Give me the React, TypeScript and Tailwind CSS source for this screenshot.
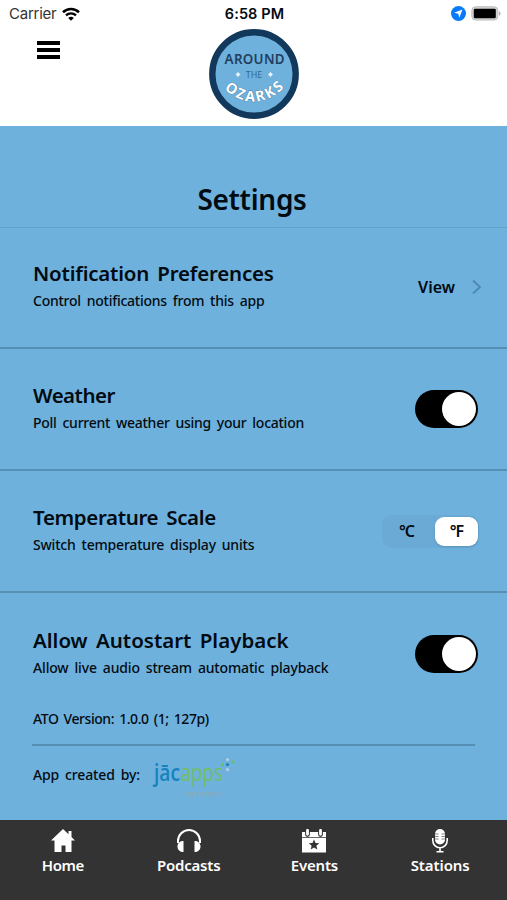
import type { ReactNode } from "react";

const settings: {
  title: string;
  titleClass: string;
  text: string;
  textClass: string;
  rowClass: string;
  control: ReactNode;
}[] = [
  {
    title: "Notification Preferences",
    titleClass: "tracking-[-0.2px] [word-spacing:3px]",
    text: "Control notifications from this app",
    textClass: "tracking-[-0.25px]",
    rowClass: "h-[121px] border-b-2 pb-[2px]",
    control: (
      <div className="flex items-center pr-[25px]">
        <span className="text-[16px] font-semibold leading-6">View</span>
        <svg className="ml-[17px] h-4 w-[10px]" viewBox="0 0 10 16" fill="none">
          <path d="M1 1.5L8 8l-7 6.5" stroke="#4d88b0" strokeWidth="1.8" />
        </svg>
      </div>
    ),
  },
  {
    title: "Weather",
    titleClass: "tracking-[-0.5px]",
    text: "Poll current weather using your location",
    textClass: "tracking-[-0.26px]",
    rowClass: "h-[122px] border-b-2",
    control: <Toggle />,
  },
  {
    title: "Temperature Scale",
    titleClass: "tracking-[-0.35px] [word-spacing:3px]",
    text: "Switch temperature display units",
    textClass: "tracking-[-0.2px]",
    rowClass: "h-[122px] border-b-2",
    control: <UnitSwitch />,
  },
  {
    title: "Allow Autostart Playback",
    titleClass: "[word-spacing:3px]",
    text: "Allow live audio stream automatic playback",
    textClass: "tracking-[-0.16px]",
    rowClass: "h-[122px]",
    control: <Toggle />,
  },
];

function Toggle() {
  return (
    <div className="mr-[29px] flex h-[38px] w-[63px] items-center justify-end rounded-full bg-black pr-[2px]">
      <div className="h-[34px] w-[34px] rounded-full bg-white" />
    </div>
  );
}

function UnitSwitch() {
  return (
    <div className="mr-[28px] flex h-[33px] w-[97px] items-center rounded-[10px] bg-[#6aaad5] pr-px text-[16px] font-semibold">
      <span className="flex-1 pr-[4px] text-center tracking-[-1px]">°C</span>
      <span className="flex h-[29px] w-[43px] items-center justify-center rounded-[9px] bg-white tracking-[-1px] shadow">
        °F
      </span>
    </div>
  );
}

function StatusBar() {
  return (
    <div className="grid h-[27px] grid-cols-3 items-center pl-[9px] pr-[6px] font-['Inter']">
      <div className="flex items-center">
        <span className="text-[15px] leading-5 tracking-[-0.25px] text-[#333]">Carrier</span>
        <svg className="ml-[6px] h-[14px] w-[18px]" viewBox="0 0 18 14" fill="none" stroke="#000">
          <path d="M1 5.2a11.6 11.6 0 0 1 16 0" strokeWidth="2.6" />
          <path d="M4 8.4a7.3 7.3 0 0 1 10 0" strokeWidth="2.4" />
          <path d="M9 13.8L6.2 11a4 4 0 0 1 5.6 0z" fill="#000" stroke="none" />
        </svg>
      </div>
      <span className="-ml-px text-center text-[14.5px] font-semibold leading-5 tracking-[0.1px]">6:58 PM</span>
      <div className="flex items-center justify-end">
        <svg className="h-[15px] w-[15px]" viewBox="0 0 15 15">
          <circle cx="7.5" cy="7.5" r="7.5" fill="#087bfb" />
          <path d="M11.5 3.5L8.3 11.8 7.3 7.8 3.2 6.8z" fill="#fff" />
        </svg>
        <svg className="ml-[5px] h-[15px] w-[30px]" viewBox="0 0 30 15">
          <rect x="0.8" y="0.8" width="26" height="13.2" rx="3.8" fill="#d3d3d3" stroke="#bbb" />
          <rect x="2.8" y="2.8" width="22" height="9.4" rx="1.2" fill="#000" />
          <path d="M28 5q3 2.4 0 4.8z" fill="#aaa" />
        </svg>
      </div>
    </div>
  );
}

function Logo() {
  return (
    <svg className="h-[90px] w-[90px]" viewBox="0 0 90 90" fontFamily="Noto Sans, sans-serif">
      <circle cx="45" cy="45" r="41.7" fill="#6fb1dd" stroke="#12395b" strokeWidth="6.4" />
      <text x="45.6" y="34.7" fontSize="13.4" fontWeight="600" fill="#223f5e" textAnchor="middle" textLength="60">
        AROUND
      </text>
      <text x="45" y="49.3" fontSize="9.6" fill="#31698f" textAnchor="middle" textLength="16.5" lengthAdjust="spacingAndGlyphs">
        THE
      </text>
      <path
        d="M29 43.3l.9 1.3 1.3.9-1.3.9-.9 1.3-.9-1.3-1.3-.9 1.3-.9zM61.5 43.3l.9 1.3 1.3.9-1.3.9-.9 1.3-.9-1.3-1.3-.9 1.3-.9z"
        fill="#e8f6ff"
        stroke="#e8f6ff"
        strokeWidth="0.6"
      />
      <path id="arc" d="M10 55.5Q45 90 80 54.5" fill="none" />
      <text
        fontSize="14.5"
        fontWeight="700"
        letterSpacing="2"
        fill="#fff"
        stroke="#3c6b92"
        strokeWidth="0.6"
        paintOrder="stroke"
      >
        <textPath href="#arc" startOffset="51.5%" textAnchor="middle">
          OZARKS
        </textPath>
      </text>
    </svg>
  );
}

function JacappsLogo() {
  return (
    <svg className="ml-[11px] mt-px h-[44px] w-[86px]" viewBox="0 0 86 44" fontFamily="Open Sans, sans-serif">
      <text y="25.5" fontSize="23" fontWeight="600">
        <tspan x="3" fill="#1683bd" textLength="26" lengthAdjust="spacingAndGlyphs">
          jāc
        </tspan>
        <tspan x="29.5" fontWeight="500" fill="#70be68" textLength="42.5" lengthAdjust="spacingAndGlyphs">
          apps
        </tspan>
      </text>
      <circle cx="76.5" cy="9.5" r="1.6" fill="#1683bd" />
      <circle cx="76.5" cy="4.5" r="1.6" fill="#b8cfdf" />
      <circle cx="76.5" cy="14.5" r="1.6" fill="#b8cfdf" />
      <circle cx="71.5" cy="9.7" r="1.6" fill="#6fbe5e" />
      <circle cx="82" cy="7" r="1.6" fill="#6fbe5e" />
      <text x="34" y="41" fontSize="6.5" fill="#9aa7aa" textLength="36" lengthAdjust="spacingAndGlyphs">
        app solutions
      </text>
    </svg>
  );
}

const tabs = [
  {
    label: "Home",
    className: "tracking-[-0.4px]",
    icon: (
      <>
        <path d="M12 0L0 11.5h3.5V23h7v-6.5h4V23h6V11.5H24l-3.5-3.4V2h-3v3.2z" />
      </>
    ),
  },
  {
    label: "Podcasts",
    className: "tracking-[-0.2px]",
    icon: (
      <>
        <path d="M1 14v-2a11 11 0 0 1 22 0v2" fill="none" stroke="#fff" strokeWidth="2" />
        <path d="M6.5 12v11c-3.5 0-6-2-6-5.5s2.5-5.5 6-5.5zM17.5 12v11c3.5 0 6-2 6-5.5s-2.5-5.5-6-5.5z" />
      </>
    ),
  },
  {
    label: "Events",
    className: "tracking-[-0.2px]",
    icon: (
      <>
        <path d="M0 3h24v5H0zM0 8.7h24v14.8H0z" />
        <path d="M5.5 1.5v4M18.5 1.5v4" stroke="#333" strokeWidth="4.8" strokeLinecap="round" />
        <path d="M5.5 1.3v4M18.5 1.3v4" stroke="#fff" strokeWidth="2.8" strokeLinecap="round" />
        <path d="M12 10.5l1.5 3.5 3.8.3-2.9 2.5.9 3.7-3.3-2-3.3 2 .9-3.7-2.9-2.5 3.8-.3z" fill="#333" />
      </>
    ),
  },
  {
    label: "Stations",
    className: "tracking-[-0.1px]",
    icon: (
      <>
        <rect x="7" y="0" width="10" height="15.5" rx="5" />
        <path d="M7 5h3.5M7 7.5h3.5M7 10h3.5M13.5 5h3.5M13.5 7.5h3.5M13.5 10h3.5" stroke="#333" strokeWidth="0.6" />
        <path d="M4.8 9v2.5a7.2 7.2 0 0 0 14.4 0V9M12 18.5V22M8.500 22.700h7" fill="none" stroke="#fff" strokeWidth="1.6" />
      </>
    ),
  },
];

export default function App() {
  return (
    <div className="flex h-[900px] w-[507px] flex-col overflow-hidden bg-[#6eb1dd] font-['Noto_Sans',sans-serif] text-[#030b12]">
      <header className="h-[126px] bg-white">
        <StatusBar />
        <div className="grid grid-cols-[1fr_90px_1fr] pt-[2px]">
          <div className="flex flex-col gap-[3px] pl-[37px] pt-[12px]">
            <div className="h-1 w-[23px] bg-black" />
            <div className="h-1 w-[23px] bg-black" />
            <div className="h-1 w-[23px] bg-black" />
          </div>
          <Logo />
        </div>
      </header>

      <h1 className="h-[102px] border-b border-[#639fc9] pr-[3px] pt-[53px] text-center text-[28px] font-semibold leading-[40px] tracking-[-0.3px]">
        Settings
      </h1>

      {settings.map((item) => (
        <section
          key={item.title}
          className={`flex shrink-0 items-center justify-between border-[#568eb4] pl-[33px] ${item.rowClass}`}
        >
          <div className="whitespace-nowrap">
            <h2 className={`text-[20.5px] font-semibold leading-[28px] ${item.titleClass}`}>{item.title}</h2>
            <p className={`text-[14px] font-medium leading-[28px] [word-spacing:2.5px] ${item.textClass}`}>
              {item.text}
            </p>
          </div>
          {item.control}
        </section>
      ))}

      <div className="mx-[32px] -mt-[8px] h-[39px] shrink-0 border-b-2 border-[#568eb4] pl-px text-[14px] font-medium leading-[23px] tracking-[-0.45px] [word-spacing:2px]">
        ATO Version: 1.0.0 (1; 127p)
      </div>
      <div className="flex flex-1 items-start pl-[33px] pt-[8px] text-[14px] font-medium">
        <span className="mt-[9px] leading-[24px] tracking-[-0.15px] [word-spacing:2.5px]">App created by:</span>
        <JacappsLogo />
      </div>

      <nav className="grid h-[80px] shrink-0 grid-cols-4 bg-[#333] pr-[4px] pt-[9px] text-white">
        {tabs.map((tab) => (
          <div key={tab.label} className="flex flex-col items-center">
            <svg className="h-6 w-6" viewBox="0 0 24 24" fill="#fff">
              {tab.icon}
            </svg>
            <span className={`text-[15px] font-semibold leading-[24px] ${tab.className}`}>{tab.label}</span>
          </div>
        ))}
      </nav>
    </div>
  );
}
